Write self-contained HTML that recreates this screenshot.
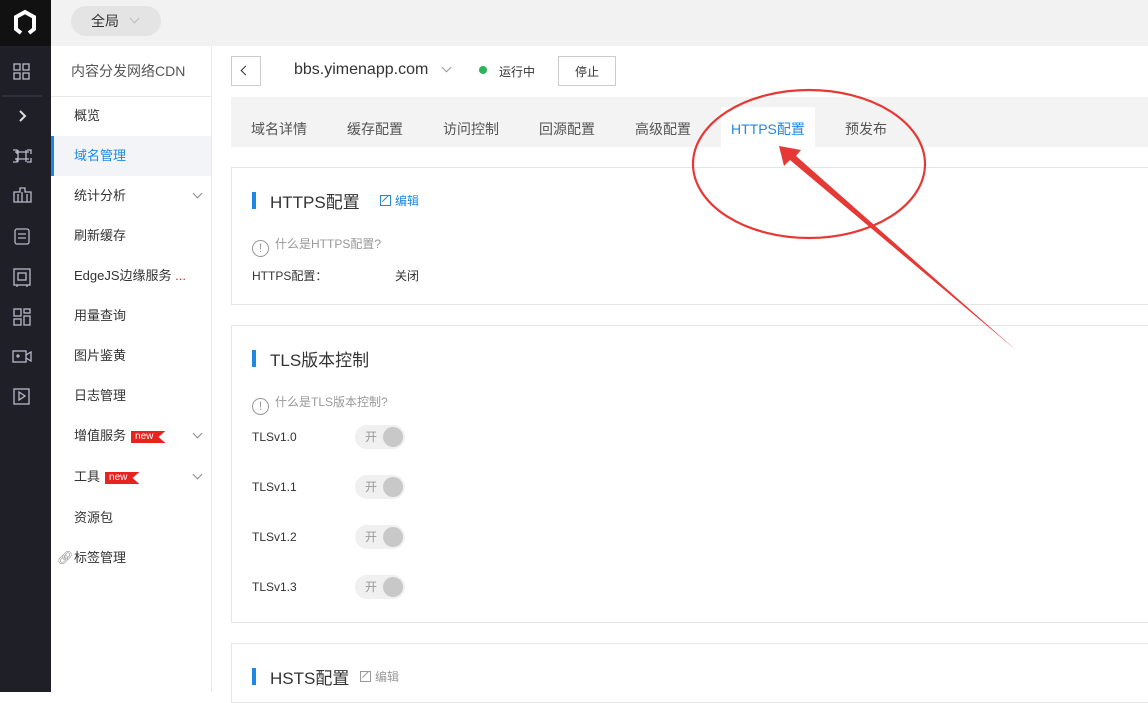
<!DOCTYPE html>
<html><head><meta charset="utf-8">
<style>
*{margin:0;padding:0;box-sizing:border-box}
body{width:1148px;height:692px;overflow:hidden;position:relative;background:#fff;font-family:"Liberation Sans","Noto Sans CJK SC",sans-serif;font-size:13px;color:#333}
.abs{position:absolute}
#dark{left:0;top:0;width:51px;height:692px;background:#1f1f28}
#logo{left:0;top:0;width:51px;height:46px;background:#111}
#top{left:51px;top:0;width:1097px;height:46px;background:#f2f2f2}
#pill{left:71px;top:6px;width:90px;height:30px;border-radius:15px;background:#e4e4e4;font-size:14px;color:#333;line-height:30px;padding-left:20px}
#side{left:51px;top:46px;width:161px;height:646px;background:#fff;border-right:1px solid #e8e8e8}
.mi{position:absolute;left:0;width:160px;height:40px;line-height:40px;padding-left:23px;font-size:13px;color:#333}
.chev{position:absolute;right:10px;top:14px;width:7px;height:7px;border-right:1.3px solid #888;border-bottom:1.3px solid #888;transform:rotate(45deg)}
.new{display:inline-block;background:#e8231f;color:#fff;font-size:10px;line-height:12px;height:12px;padding:0 12px 0 4px;margin-left:5px;vertical-align:1px;clip-path:polygon(0 0,100% 0,80% 50%,100% 100%,0 100%)}
.card{position:absolute;left:231px;width:930px;background:#fff;border:1px solid #e6e6e6}
.ttl{position:absolute;left:20px;font-size:17px;color:#333;padding-left:18px}
.ttl:before{content:"";position:absolute;left:0;top:4px;width:4px;height:17px;background:#1e88e5}
.tip{position:absolute;left:20px;color:#999;font-size:12px}
.tip i{display:inline-block;width:17px;height:17px;border:1.3px solid #999;border-radius:50%;font-style:normal;text-align:center;line-height:15px;font-size:12px;margin-right:6px;vertical-align:-4px}
.row{position:absolute;left:20px;font-size:12px;color:#333}
.sw{position:absolute;left:123px;width:50px;height:24px;border-radius:12px;background:#f0f0f0;color:#999;font-size:12px;line-height:24px;padding-left:10px}
.sw:after{content:"";position:absolute;right:2px;top:2px;width:20px;height:20px;border-radius:50%;background:#c8c8c8}
.tab{position:absolute;top:97px;height:50px;line-height:64px;font-size:14px;color:#555}
.ed{display:inline-block;width:11px;height:11px;border:1.2px solid currentColor;margin-right:4px;vertical-align:-1px;position:relative}
.ed:after{content:"";position:absolute;left:4px;top:-2px;width:1.2px;height:9px;background:currentColor;transform:rotate(45deg)}
</style></head><body>
<div class="abs" id="dark"></div>
<div class="abs" id="logo">
<svg width="51" height="46"><path d="M21 33 L16 29 L16 17 L25 12 L34 17 L34 29 L29 33" stroke="#fff" stroke-width="4" fill="none" stroke-linejoin="miter"/></svg>
</div>
<svg class="abs" style="left:0;top:46px" width="51" height="380" fill="none" stroke="#b9b9c8" stroke-width="1.3">
<rect x="14" y="18" width="6" height="6"/><rect x="23" y="18" width="6" height="6"/><rect x="14" y="27" width="6" height="6"/><rect x="23" y="27" width="6" height="6"/>
<line x1="2" y1="50" x2="42" y2="50" stroke="#3a3a45"/>
<path d="M20 65 L25 70 L20 75" stroke="#ddd" stroke-width="2"/>
<path d="M15 106 h14 M15 113 h14 M18 104 v12 M26 104 v12 M13 104 h4 v4 M27 104 h4 v4 M13 116 h4 v-4 M27 116 h4 v-4"/>
<path d="M14 156 v-10 h6 v-4 h5 v4 h6 v10 z M18 148 v8 M27 148 v8 M22 146 v10"/>
<rect x="15" y="183" width="14" height="15" rx="2"/><path d="M18 188 h8 M18 192 h8"/>
<rect x="14" y="223" width="16" height="16"/><rect x="18" y="227" width="8" height="7"/><path d="M17 239 v2 M27 239 v2"/>
<rect x="14" y="263" width="7" height="7"/><rect x="24" y="263" width="6" height="4"/><rect x="24" y="270" width="6" height="9"/><rect x="14" y="273" width="7" height="6"/>
<rect x="13" y="305" width="13" height="11"/><path d="M26 309 l5 -3 v9 l-5 -3"/><circle cx="18" cy="310" r="1"/>
<rect x="14" y="343" width="15" height="15"/><path d="M19 346 l6 4 l-6 4 z"/>
</svg>
<div class="abs" id="top"></div>
<div class="abs" id="pill">全局<span style="display:inline-block;width:7px;height:7px;border-right:1.3px solid #bbb;border-bottom:1.3px solid #bbb;transform:rotate(45deg);margin-left:12px;vertical-align:4px"></span></div>
<div class="abs" id="side">
<div style="position:absolute;left:20px;top:15px;font-size:14px;color:#555">内容分发网络CDN</div>
<div style="position:absolute;left:0;top:50px;width:160px;border-top:1px solid #e8e8e8"></div>
<div class="mi" style="top:50px">概览</div>
<div class="mi" style="top:90px;background:#f3f4f8;color:#1e88e5;border-left:3px solid #1e88e5;padding-left:20px">域名管理</div>
<div class="mi" style="top:130px">统计分析<span class="chev"></span></div>
<div class="mi" style="top:170px">刷新缓存</div>
<div class="mi" style="top:210px">EdgeJS边缘服务 <span style="color:#e8231f">...</span></div>
<div class="mi" style="top:250px">用量查询</div>
<div class="mi" style="top:290px">图片鉴黄</div>
<div class="mi" style="top:330px">日志管理</div>
<div class="mi" style="top:370px">增值服务<span class="new">new</span><span class="chev"></span></div>
<div class="mi" style="top:411px">工具<span class="new">new</span><span class="chev"></span></div>
<div class="mi" style="top:452px">资源包</div>
<div class="mi" style="top:492px"><span style="position:absolute;left:6px;color:#888">&#x1F517;&#xFE0E;</span>标签管理</div>
</div>
<div class="abs" style="left:231px;top:56px;width:30px;height:30px;border:1px solid #ccc"></div>
<div class="abs" style="left:242px;top:67px;width:7px;height:7px;border-left:1.5px solid #333;border-bottom:1.5px solid #333;transform:rotate(45deg)"></div>
<div class="abs" style="left:294px;top:61px;font-size:16px;color:#333">bbs.yimenapp.com</div>
<div class="abs" style="left:443px;top:64px;width:7px;height:7px;border-right:1.3px solid #999;border-bottom:1.3px solid #999;transform:rotate(45deg)"></div>
<div class="abs" style="left:479px;top:66px;width:8px;height:8px;border-radius:50%;background:#2bb45a"></div>
<div class="abs" style="left:499px;top:63px;font-size:12px;color:#333">运行中</div>
<div class="abs" style="left:558px;top:56px;width:58px;height:30px;border:1px solid #ccc;text-align:center;line-height:30px;font-size:12px">停止</div>
<div class="abs" style="left:231px;top:97px;width:917px;height:50px;background:#f3f3f3"></div>
<div class="abs" style="left:721px;top:107px;width:94px;height:40px;background:#fff"></div>
<div class="tab" style="left:251px">域名详情</div>
<div class="tab" style="left:347px">缓存配置</div>
<div class="tab" style="left:443px">访问控制</div>
<div class="tab" style="left:539px">回源配置</div>
<div class="tab" style="left:635px">高级配置</div>
<div class="tab" style="left:731px;color:#1e88e5">HTTPS配置</div>
<div class="tab" style="left:845px">预发布</div>
<div class="card" style="top:167px;height:138px">
<div class="ttl" style="top:20px">HTTPS配置<span style="position:absolute;left:128px;top:4px;font-size:12px;color:#1e88e5;white-space:nowrap"><span class="ed"></span>编辑</span></div>
<div class="tip" style="top:67px"><i>!</i>什么是HTTPS配置?</div>
<div class="row" style="top:99px">HTTPS配置：</div>
<div class="row" style="left:163px;top:99px">关闭</div>
</div>
<div class="card" style="top:325px;height:298px">
<div class="ttl" style="top:20px">TLS版本控制</div>
<div class="tip" style="top:67px"><i>!</i>什么是TLS版本控制?</div>
<div class="row" style="top:104px">TLSv1.0</div><div class="sw" style="top:99px">开</div>
<div class="row" style="top:154px">TLSv1.1</div><div class="sw" style="top:149px">开</div>
<div class="row" style="top:204px">TLSv1.2</div><div class="sw" style="top:199px">开</div>
<div class="row" style="top:254px">TLSv1.3</div><div class="sw" style="top:249px">开</div>
</div>
<div class="card" style="top:643px;height:60px">
<div class="ttl" style="top:20px">HSTS配置<span style="position:absolute;left:108px;top:4px;font-size:12px;color:#999;white-space:nowrap"><span class="ed"></span>编辑</span></div>
</div>
<svg class="abs" style="left:0;top:0" width="1148" height="692">
<ellipse cx="809" cy="164" rx="116" ry="74" fill="none" stroke="#e53935" stroke-width="2.2"/>
<path d="M779 146 L801 150 L796 156 L1017 351 L790 160 L784 166 Z" fill="#e53935"/>
</svg>
</body></html>
